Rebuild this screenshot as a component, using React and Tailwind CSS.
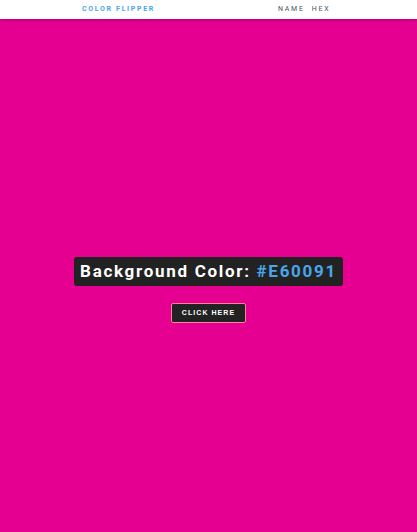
import React from 'react';

const App = () => {
  return (
    <div className="min-h-screen bg-[#e60091]" style={{ fontFamily: 'Roboto, "Liberation Sans", sans-serif' }}>
      {/* Nav */}
      <nav className="h-[19px] bg-white shadow-[0_1px_4px_rgba(0,0,0,0.25)] relative">
        <div className="flex items-center h-full">
          <span className="ml-[82px] w-[196px] text-[7px] font-bold tracking-[0.24em] text-[#49a6e9]">COLOR FLIPPER</span>
          <div className="flex gap-[7px] text-[7px] tracking-[0.25em] text-[#4b5563]">
            <span>NAME</span>
            <span>HEX</span>
          </div>
        </div>
      </nav>

      {/* Main */}
      <main className="flex flex-col items-center pt-[238px]">
        <div className="bg-[#222222] rounded-[3px] h-[29px] w-[269px] flex items-center justify-center">
          <h2 className="text-[17px] font-bold tracking-[0.1em] text-white leading-none">
            Background Color: <span className="text-[#49a6e9]">#E60091</span>
          </h2>
        </div>
        <button className="mt-[17px] h-[20px] w-[75px] bg-[#222222] border border-[#f4878f] rounded-[2px] text-white text-[7px] font-bold tracking-[0.15em] flex items-center justify-center" style={{ fontFamily: '"Liberation Sans", Arial, sans-serif' }}>
          CLICK HERE
        </button>
      </main>
    </div>
  );
};

export default App;
